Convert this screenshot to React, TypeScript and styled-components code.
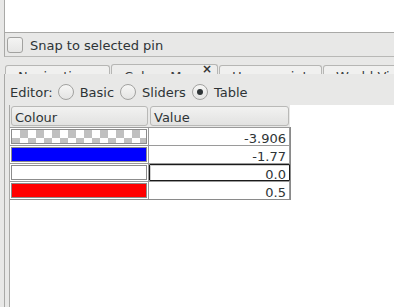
import React from 'react'
import styled, { createGlobalStyle } from 'styled-components'

const GlobalStyle = createGlobalStyle`
  html, body {
    margin: 0;
    padding: 0;
    background: #e8e8e7;
    overflow: hidden;
  }
  body {
    font-family: "DejaVu Sans", "Noto Sans", sans-serif;
    font-size: 13px;
    color: #2e3436;
  }
`

const Window = styled.div`
  width: 394px;
  height: 307px;
  display: flex;
  flex-direction: column;
  padding-left: 4px;
  box-sizing: border-box;
`

const TopGroup = styled.div`
  border-left: 1px solid #a9a9a7;
  border-bottom: 1px solid #b8b8b6;
  display: flex;
  flex-direction: column;
`

const WhiteArea = styled.div`
  height: 32px;
  background: #fff;
  border-bottom: 1px solid #a9a9a7;
`

const CheckRow = styled.label`
  height: 22px;
  display: flex;
  align-items: center;
  gap: 7px;
  padding-left: 2px;
  padding-top: 1px;
`

const CheckBox = styled.span`
  width: 14px;
  height: 14px;
  border: 1px solid #a2a2a0;
  border-radius: 3px;
  background: linear-gradient(#f4f4f3, #e6e6e5);
`

const TabBar = styled.div`
  margin-top: 7px;
  height: 10px;
  display: flex;
  align-items: flex-end;
  gap: 1px;
  padding-left: 1px;
  overflow: hidden;
`

const Tab = styled.div<{ $active?: boolean; $w: number }>`
  position: relative;
  flex: 0 0 ${p => p.$w}px;
  height: ${p => (p.$active ? 10 : 9)}px;
  box-sizing: border-box;
  border: 1px solid #b6b6b4;
  border-bottom: none;
  border-radius: 3px 3px 0 0;
  background: ${p => (p.$active ? '#ededec' : '#f0f0ef')};
  overflow: hidden;
  padding: ${p => (p.$active ? 5 : 4)}px 0 0 12px;
  line-height: 14px;
  white-space: nowrap;
  color: #3a3d3f;
`

const Close = styled.span`
  position: absolute;
  right: 5px;
  top: -3px;
  font-size: 12px;
  font-weight: bold;
  color: #333;
`

const Panel = styled.div`
  flex: 1;
  border-left: 1px solid #a9a9a7;
  display: flex;
  flex-direction: column;
  padding-left: 4px;
`

const EditorRow = styled.div`
  height: 31px;
  display: flex;
  align-items: center;
  padding-left: 1px;
  padding-top: 5px;
  box-sizing: border-box;
  gap: 5px;
`

const RadioItem = styled.span`
  display: inline-flex;
  align-items: center;
  gap: 6px;
  margin-right: 1px;
`

const Radio = styled.span<{ $on?: boolean }>`
  width: 14px;
  height: 14px;
  border: 1px solid #a2a2a0;
  border-radius: 50%;
  background: linear-gradient(#f6f6f5, #e4e4e3);
  display: flex;
  align-items: center;
  justify-content: center;
  &::after {
    content: '';
    display: ${p => (p.$on ? 'block' : 'none')};
    width: 6px;
    height: 6px;
    border-radius: 50%;
    background: #2e3436;
  }
`

const TableView = styled.div`
  flex: 1;
  background: #fff;
  border-left: 1px solid #a9a9a7;
`

const Grid = styled.div`
  display: grid;
  grid-template-columns: 139px 141px;
  width: 280px;
  background: #e8e8e7;
`

const Head = styled.div`
  height: 20px;
  margin: 1px;
  box-sizing: border-box;
  border: 1px solid #b9b9b7;
  border-radius: 3px;
  background: linear-gradient(#f2f2f1, #e2e2e1);
  display: flex;
  align-items: center;
  padding-left: 3px;
  padding-top: 2px;
`

const Body = styled.div`
  grid-column: 1 / 3;
  display: grid;
  grid-template-columns: 139px 141px;
  border-right: 1px solid #8a8a8a;
  border-bottom: 1px solid #8a8a8a;
  background: #fff;
  box-sizing: border-box;
  width: 281px;
`

const Cell = styled.div`
  height: 18px;
  box-sizing: border-box;
  border-top: 1px solid #9a9a9a;
  border-right: 1px solid #9a9a9a;
  position: relative;
`

const Swatch = styled.div<{ $c: string; $checker?: boolean }>`
  position: absolute;
  left: 1px;
  top: 1px;
  right: 1px;
  bottom: 1px;
  border: 1px solid #8c8c8c;
  background: ${p =>
    p.$checker
      ? 'repeating-conic-gradient(#c0c0c0 0 25%, #fff 0 50%) 0 0 / 16px 16px'
      : p.$c};
`

const ValueText = styled.div<{ $edit?: boolean }>`
  height: 100%;
  box-sizing: border-box;
  display: flex;
  align-items: center;
  justify-content: flex-end;
  padding-right: 3px;
  line-height: 1;
  padding-top: 3px;
  ${p =>
    p.$edit &&
    `
    border: 1px solid #1a1a1a;
    margin: 0 -1px 0 0;
    border-radius: 1px;
    box-shadow: inset 1px 1px 0 #d0d0d0;
  `}
`

const rows = [
  { c: '', checker: true, v: '-3.906' },
  { c: '#0000ff', v: '-1.77' },
  { c: '#ffffff', v: '0.0', edit: true },
  { c: '#ff0000', v: '0.5' },
]

export default function App() {
  return (
    <>
      <GlobalStyle />
      <Window>
        <TopGroup>
          <WhiteArea />
          <CheckRow>
            <CheckBox />
            Snap to selected pin
          </CheckRow>
        </TopGroup>
        <TabBar>
          <Tab $w={105}>Navigation</Tab>
          <Tab $w={107} $active>
            Colour Map
            <Close>×</Close>
          </Tab>
          <Tab $w={103}>Home points</Tab>
          <Tab $w={80}>World View</Tab>
        </TabBar>
        <Panel>
          <EditorRow>
            Editor:
            <RadioItem>
              <Radio />
              Basic
            </RadioItem>
            <RadioItem>
              <Radio />
              Sliders
            </RadioItem>
            <RadioItem>
              <Radio $on />
              Table
            </RadioItem>
          </EditorRow>
          <TableView>
            <Grid>
              <Head>Colour</Head>
              <Head>Value</Head>
              <Body>
                {rows.map((r, i) => (
                  <React.Fragment key={i}>
                    <Cell>
                      <Swatch $c={r.c} $checker={r.checker} />
                    </Cell>
                    <Cell>
                      <ValueText $edit={r.edit}>{r.v}</ValueText>
                    </Cell>
                  </React.Fragment>
                ))}
              </Body>
            </Grid>
          </TableView>
        </Panel>
      </Window>
    </>
  )
}
